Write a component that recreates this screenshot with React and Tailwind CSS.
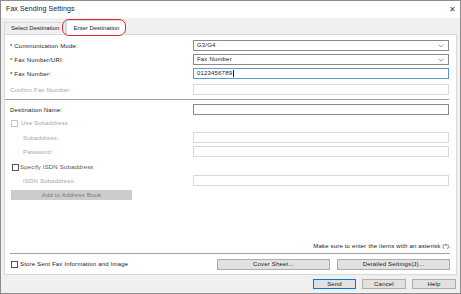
import React from 'react';

const font = { fontFamily: '"Liberation Sans", Arial, sans-serif' };

const Chevron = () => (
  <svg width="6" height="4" viewBox="0 0 6 4" className="text-[#7a7a7a]">
    <path d="M0.8 0.8 L3 3 L5.2 0.8" fill="none" stroke="currentColor" strokeWidth="0.7" />
  </svg>
);

const Select = ({ value }) => (
  <div className="h-[11px] border border-[#8a8a8a] bg-white flex items-center justify-between pl-[3px] pr-[4px] text-[6px] text-[#1a1a1a]">
    <span>{value}</span>
    <Chevron />
  </div>
);

const Input = ({ dark, focus, children }) => (
  <div
    className={
      'h-[11px] bg-white flex items-center pl-[3px] text-[6px] text-[#1a1a1a] border ' +
      (focus ? 'border-[#5b9bd5]' : dark ? 'border-[#8a8a8a]' : 'border-[#d9d9d9]')
    }
  >
    {children}
  </div>
);

const Row = ({ label, className = '', labelClass = 'text-[#1a1a1a]', indent = 'pl-[5px]', children }) => (
  <div className={'grid grid-cols-[188px_1fr] items-center ' + className}>
    <span className={'text-[6px] leading-none ' + indent + ' ' + labelClass}>{label}</span>
    {children}
  </div>
);

const Check = ({ dark }) => (
  <div className={'w-[7px] h-[7px] bg-white border ' + (dark ? 'border-[#555]' : 'border-[#c4c4c4]')} />
);

const Btn = ({ children, className = '' }) => (
  <div className={'h-[11px] bg-[#e1e1e1] border border-[#adadad] flex items-center justify-center text-[6px] text-[#1a1a1a] ' + className}>
    {children}
  </div>
);

export default function App() {
  return (
    <div className="w-[461px] h-[294px] bg-[#f0f0f0] border border-[#8c8c8c] flex flex-col overflow-hidden tracking-[0.18px]" style={font}>
      {/* title bar */}
      <div className="h-[17px] bg-white flex items-center justify-between pl-[5px] pr-[4px]">
        <span className="text-[7px] text-[#1a1a1a] tracking-[0.1px]">Fax Sending Settings</span>
        <span className="text-[8px] text-[#444] leading-none">✕</span>
      </div>

      {/* tabs */}
      <div className="relative h-[16px] flex items-end pl-[3px] tracking-normal">
        <div className="h-[12px] px-[6px] border border-b-0 border-[#d9d9d9] bg-[#f0f0f0] flex items-center text-[6px] text-[#1a1a1a]">
          Select Destination
        </div>
        <div className="h-[15px] -mb-px relative z-10 px-[6px] border border-b-0 border-[#d9d9d9] bg-white flex items-center text-[6px] text-[#1a1a1a]">
          Enter Destination
        </div>
        <div className="absolute left-[61px] top-[1px] w-[64px] h-[17px] rounded-[7px] border-[1.5px] border-[#dd2a32] z-20" />
      </div>

      {/* panel */}
      <div className="mx-[3px] h-[241px] bg-white border border-[#d9d9d9] flex flex-col">
        <div className="pr-[7px]">
          <Row label="* Communication Mode:" className="mt-[5px]">
            <Select value="G3/G4" />
          </Row>
          <Row label="* Fax Number/URI:" className="mt-[3px]">
            <Select value="Fax Number" />
          </Row>
          <Row label="* Fax Number:" className="mt-[3px]">
            <Input focus>
              <span>0123456789</span>
              <span className="ml-px w-px h-[7px] bg-[#1a1a1a]" />
            </Input>
          </Row>
          <Row label="Confirm Fax Number:" labelClass="text-[#a6a6a6]" className="mt-[5px]">
            <Input />
          </Row>
          <div className="mt-[4px] h-px bg-[#a0a0a0]" />
          <Row label="Destination Name:" className="mt-[4px]">
            <Input dark />
          </Row>
          <div className="mt-[4px] h-[8px] flex items-center gap-[3px] pl-[6px]">
            <Check />
            <span className="text-[6px] text-[#a6a6a6]">Use Subaddress</span>
          </div>
          <Row label="Subaddress:" indent="pl-[18px]" labelClass="text-[#a6a6a6]" className="mt-[5px]">
            <Input />
          </Row>
          <Row label="Password:" indent="pl-[18px]" labelClass="text-[#a6a6a6]" className="mt-[3px]">
            <Input />
          </Row>
          <div className="mt-[6px] h-[8px] flex items-center gap-[1px] pl-[7px]">
            <Check dark />
            <span className="text-[6px] text-[#555]">Specify ISDN Subaddress</span>
          </div>
          <Row label="ISDN Subaddress:" indent="pl-[18px]" labelClass="text-[#a6a6a6]" className="mt-[4px]">
            <Input />
          </Row>
          <div className="mt-[4px] ml-[6px] w-[121px] h-[10px] bg-[#cccccc] flex items-center justify-center text-[6px] text-[#7a7a7a]">
            Add to Address Book
          </div>
        </div>

        <div className="mt-auto pb-[4px]">
          <div className="text-right pr-[5px] text-[6px] text-[#1a1a1a] leading-none">
            Make sure to enter the items with an asterisk (*).
          </div>
          <div className="mt-[4px] ml-[5px] mr-[6px] h-px bg-[#a0a0a0]" />
          <div className="mt-[5px] flex items-center pl-[6px] pr-[6px]">
            <Check dark />
            <span className="ml-[2px] text-[6px] text-[#1a1a1a]">Store Sent Fax Information and Image</span>
            <Btn className="ml-auto w-[113px]">Cover Sheet...</Btn>
            <Btn className="ml-[7px] w-[113px]">Detailed Settings(J)...</Btn>
          </div>
        </div>
      </div>

      {/* footer */}
      <div className="flex-1 flex items-center justify-end gap-[6px] pr-[4px]">
        <Btn className="w-[43px] !h-[10px] !border-[#0078d7]">Send</Btn>
        <Btn className="w-[44px] !h-[10px]">Cancel</Btn>
        <Btn className="w-[44px] !h-[10px]">Help</Btn>
      </div>
    </div>
  );
}
